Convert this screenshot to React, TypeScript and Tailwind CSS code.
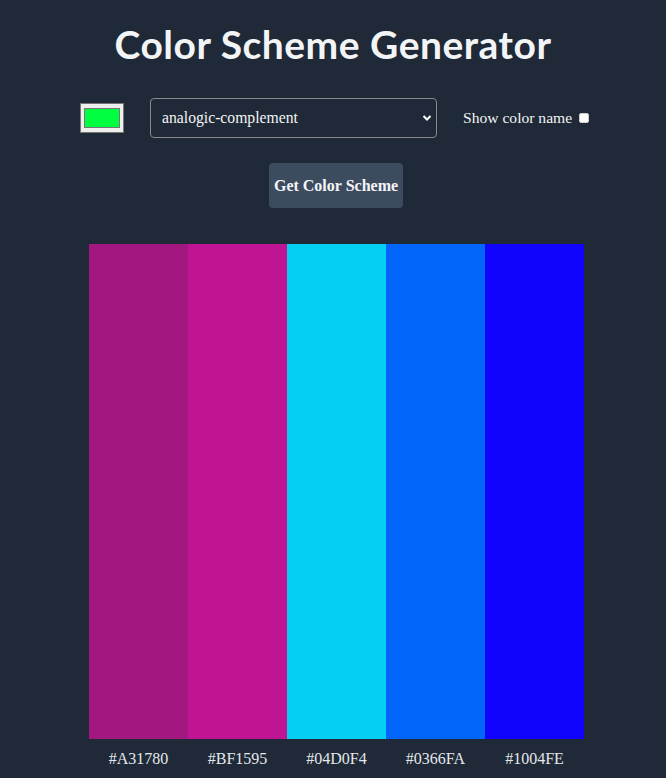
import React from "react";

const colors = ["#A31780", "#BF1595", "#04D0F4", "#0366FA", "#1004FE"];

export default function App() {
  return (
    <div className="min-h-[778px] w-full bg-[#1f2937] text-white" style={{ fontFamily: '"Liberation Serif", serif' }}>
      <h1
        className="pt-[24px] text-center text-[39px] font-bold leading-[40px] tracking-[0.5px] text-[#f3f4f6]"
        style={{ fontFamily: 'Lato, "Noto Sans", sans-serif' }}
      >
        Color Scheme Generator
      </h1>
      <div className="mt-[34px] flex items-center">
        <div className="ml-[80px] flex h-[30px] w-[44px] items-center justify-center border border-[#767676] bg-[#efefef]">
          <div className="h-[20px] w-[36px] border border-[#777] bg-[#00ff40]" />
        </div>
        <div className="ml-[26px] flex h-[40px] w-[287px] items-center justify-between rounded-[4px] border border-[#8a8a8a] bg-[#1f2937] pl-[11px] pr-[4px]">
          <span className="text-[15.7px] text-[#f3f4f6]">analogic-complement</span>
          <svg width="10" height="8" viewBox="0 0 10 8">
            <path d="M1.5 2 L5 5.5 L8.5 2" stroke="#fff" strokeWidth="2" fill="none" />
          </svg>
        </div>
        <span className="ml-[26px] text-[15.6px] text-[#f3f4f6]">Show color name</span>
        <div className="ml-[7px] h-[10px] w-[10px] rounded-[2px] border border-[#ccc] bg-white" />
      </div>
      <div className="mt-[25px] flex">
        <button className="ml-[269px] h-[45px] w-[134px] rounded-[4px] bg-[#3d4b5f] text-[16px] font-bold text-[#f3f4f6]">
          Get Color Scheme
        </button>
      </div>
      <div className="mt-[36px] flex">
        <div className="ml-[89px] flex w-[495px] flex-col">
          <div className="flex h-[495px]">
            {colors.map((c) => (
              <div key={c} className="flex-1" style={{ backgroundColor: c }} />
            ))}
          </div>
          <div className="flex pt-[10px]">
            {colors.map((c) => (
              <div key={c} className="flex-1 text-center text-[16px] leading-[20px] text-[#e5e7eb]" style={{ fontFamily: '"Liberation Serif", serif' }}>
                {c}
              </div>
            ))}
          </div>
        </div>
      </div>
    </div>
  );
}
